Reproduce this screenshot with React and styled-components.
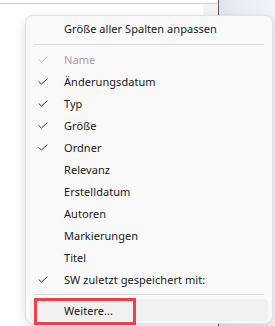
import React from 'react';
import styled, { createGlobalStyle } from 'styled-components';

const GlobalStyle = createGlobalStyle`
  html, body { margin: 0; padding: 0; }
  body {
    width: 275px;
    height: 326px;
    overflow: hidden;
    background: #ffffff;
    font-family: "Segoe UI", "Noto Sans", "Open Sans", sans-serif;
  }
`;

const Screen = styled.div`
  position: relative;
  display: flex;
  width: 275px;
  height: 326px;
`;

const ListPane = styled.div`
  width: 218px;
  height: 100%;
  background: #ffffff;
  display: flex;
  flex-direction: column;
  padding-top: 3px;
  box-sizing: border-box;
`;

const HeaderLine = styled.div`
  height: 1px;
  background: #c9d6de;
`;

const HeaderRow = styled.div`
  display: flex;
  justify-content: flex-end;
  height: 12px;
`;

const HeaderCell = styled.div`
  width: 15px;
  background: #f3f3f3;
`;

const Divider = styled.div`
  width: 1px;
  height: 100%;
  background: #5a5a5a;
`;

const SidePane = styled.div`
  flex: 1;
  height: 100%;
  background: linear-gradient(90deg, #dfe4ea 0%, #eaeff5 40%, #f1f5fa 100%);
`;

const Menu = styled.div`
  position: absolute;
  left: 25px;
  top: 15px;
  width: 248px;
  height: 309px;
  box-sizing: border-box;
  padding: 2px 4px;
  background: #f9f9f9;
  border: 1px solid #e3e3e3;
  border-radius: 8px;
  box-shadow: 0 4px 12px rgba(0, 0, 0, 0.12), 0 0 2px rgba(0, 0, 0, 0.06);
  display: flex;
  flex-direction: column;
`;

const Item = styled.div`
  display: flex;
  align-items: center;
  height: 22px;
  border-radius: 4px;
  font-size: 11px;
  letter-spacing: 0.05px;
  color: ${p => (p.$disabled ? '#a3a3a3' : '#1a1a1a')};
  background: ${p => (p.$hover ? '#f0f0f0' : 'transparent')};
  white-space: nowrap;
`;

const Check = styled.span`
  width: 34px;
  display: flex;
  align-items: center;
  padding-left: 8px;
  box-sizing: border-box;
  color: ${p => (p.$disabled ? '#b5b5b5' : '#3a3a3a')};
`;

const Separator = styled.div`
  height: 1px;
  margin: 4px 4px;
  background: #dadada;
`;

const Highlight = styled.div`
  position: absolute;
  left: 34px;
  top: 298px;
  width: 102px;
  height: 27px;
  box-sizing: border-box;
  border: 3px solid #e8434a;
`;

const CheckIcon = () => (
  <svg width="10" height="7" viewBox="0 0 10 7" fill="none">
    <path d="M0.6 3.4 L3.4 6.1 L9.4 0.6" stroke="currentColor" strokeWidth="1" />
  </svg>
);

const columns = [
  { label: 'Name', checked: true, disabled: true },
  { label: 'Änderungsdatum', checked: true },
  { label: 'Typ', checked: true },
  { label: 'Größe', checked: true },
  { label: 'Ordner', checked: true },
  { label: 'Relevanz' },
  { label: 'Erstelldatum' },
  { label: 'Autoren' },
  { label: 'Markierungen' },
  { label: 'Titel' },
  { label: 'SW zuletzt gespeichert mit:', checked: true },
];

export default function App() {
  return (
    <>
      <GlobalStyle />
      <Screen>
        <ListPane>
          <HeaderLine />
          <HeaderRow>
            <HeaderCell />
          </HeaderRow>
        </ListPane>
        <Divider />
        <SidePane />

        <Menu>
          <Item>
            <Check />
            Größe aller Spalten anpassen
          </Item>
          <Separator />
          {columns.map(c => (
            <Item key={c.label} $disabled={c.disabled}>
              <Check $disabled={c.disabled}>{c.checked && <CheckIcon />}</Check>
              {c.label}
            </Item>
          ))}
          <Separator />
          <Item $hover>
            <Check />
            Weitere...
          </Item>
        </Menu>
        <Highlight />
      </Screen>
    </>
  );
}
